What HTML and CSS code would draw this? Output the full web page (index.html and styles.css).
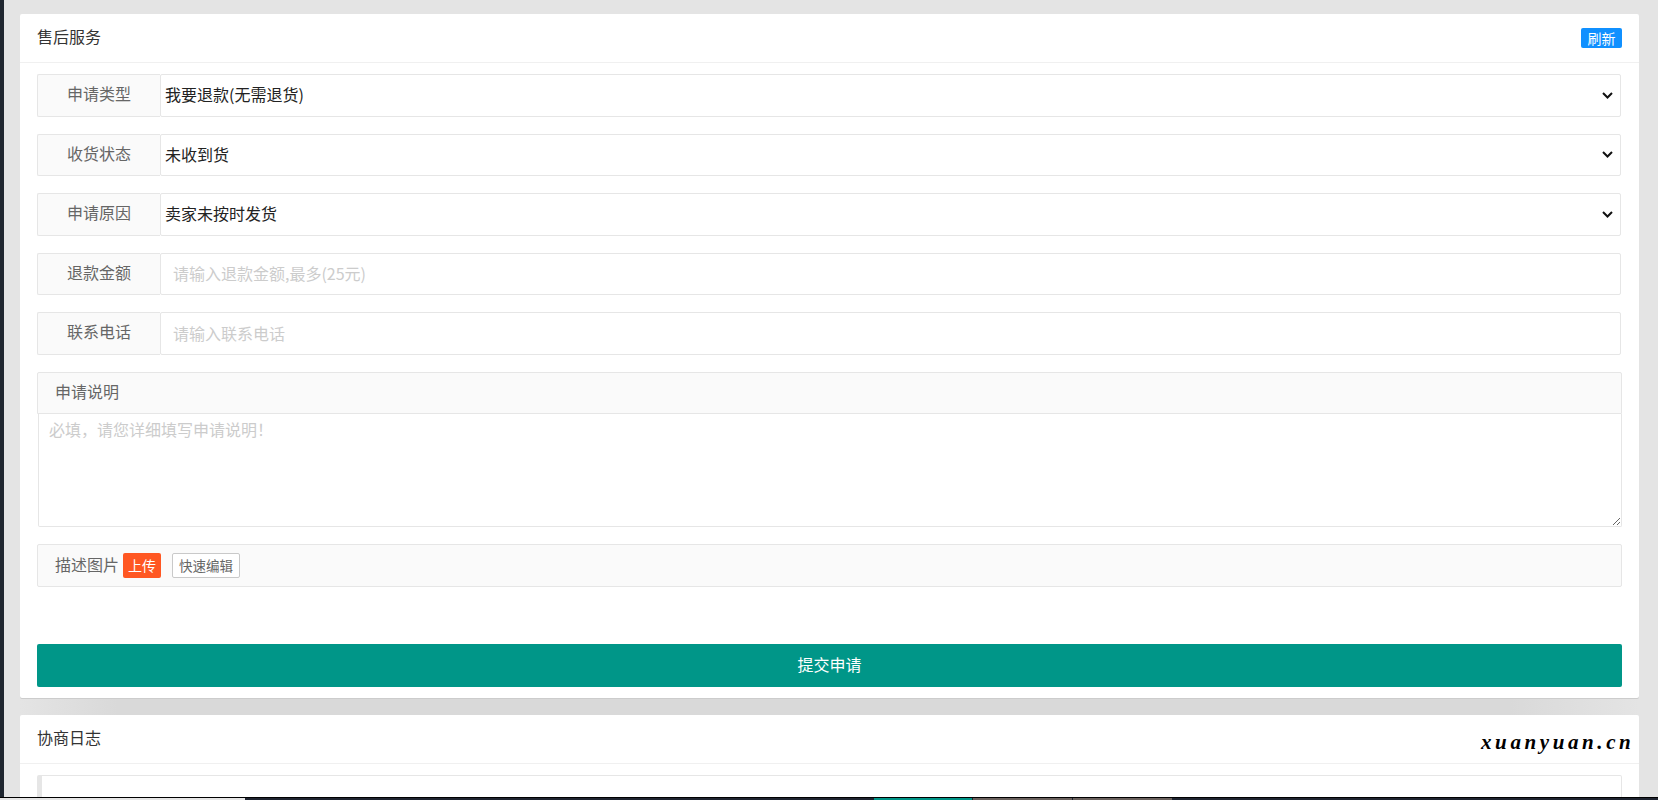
FILE: index.html

```html
<!DOCTYPE html>
<html lang="zh-CN">
<head>
    <meta charset="UTF-8">
    <meta name="viewport" content="width=device-width, initial-scale=1.0">
    <title>售后服务</title>
    <link rel="stylesheet" href="styles.css">
</head>
<body>
    <div class="page">
        <div class="side-strip"></div>
        <div class="cards">
            <div class="card card-main">
                <div class="card-header">
                    <span class="card-title">售后服务</span>
                    <button class="btn-refresh" type="button">刷新</button>
                </div>
                <form class="card-body">
                    <div class="form-row">
                        <label class="row-label">申请类型</label>
                        <select class="row-field row-select">
                            <option>我要退款(无需退货)</option>
                        </select>
                    </div>
                    <div class="form-row">
                        <label class="row-label">收货状态</label>
                        <select class="row-field row-select">
                            <option>未收到货</option>
                        </select>
                    </div>
                    <div class="form-row">
                        <label class="row-label">申请原因</label>
                        <select class="row-field row-select">
                            <option>卖家未按时发货</option>
                        </select>
                    </div>
                    <div class="form-row">
                        <label class="row-label">退款金额</label>
                        <input class="row-field row-input" type="text" placeholder="请输入退款金额,最多(25元)">
                    </div>
                    <div class="form-row">
                        <label class="row-label">联系电话</label>
                        <input class="row-field row-input" type="text" placeholder="请输入联系电话">
                    </div>
                    <div class="text-block">
                        <div class="text-title">申请说明</div>
                        <textarea class="text-area" placeholder="必填，请您详细填写申请说明！"></textarea>
                    </div>
                    <div class="pic-row">
                        <span class="pic-label">描述图片</span>
                        <button class="btn-upload" type="button">上传</button>
                        <button class="btn-edit" type="button">快速编辑</button>
                    </div>
                    <button class="btn-submit" type="button">提交申请</button>
                </form>
            </div>
            <div class="card card-log">
                <div class="card-header">
                    <span class="card-title">协商日志</span>
                </div>
                <div class="card-body">
                    <div class="log-box"></div>
                </div>
            </div>
        </div>
        <div class="side-space"></div>
    </div>

    <!-- watermark and the taskbar edge sit over the page -->
    <div class="watermark">xuanyuan.cn</div>
    <div class="taskbar">
        <div class="task-light"></div>
        <div class="task-dark"></div>
        <div class="task-active"></div>
        <div class="task-app"></div>
        <div class="task-app"></div>
    </div>
</body>
</html>
```

FILE: styles.css

```css
html, body {
    height: 100%;
    overflow: hidden;
}

body {
    margin: 0;
    padding: 0;
    background-color: #e4e4e4;
    color: #333;
    font-family: "Noto Sans CJK SC", "Liberation Sans", sans-serif;
    font-size: 16px;
}

.page {
    display: flex;
    height: 800px;
    overflow: hidden;
}

.side-strip {
    flex: 0 0 4px;
    background-color: #1f2630;
}

.cards {
    flex: 0 0 1619px;
    margin: 14px 0 0 16px;
    background: linear-gradient(to right, #e4e4e4, #d9d9d9 6%, #d9d9d9 92%, #e4e4e4);
}

.side-space {
    flex: 1;
}

.card {
    background-color: #fff;
    border-radius: 2px;
}

.card-main {
    box-shadow: 0 1px 0 #ccc;
}

.card-log {
    margin-top: 17px;
    height: 120px;
}

.card-header {
    display: flex;
    align-items: center;
    justify-content: space-between;
    height: 48px;
    padding: 0 17px;
    border-bottom: 1px solid #f0f0f0;
}

.card-title {
    margin-bottom: 4px;
}

.btn-refresh {
    width: 41px;
    height: 20px;
    padding: 0;
    border: none;
    border-radius: 2px;
    background-color: #1090ff;
    color: #fff;
    font-family: inherit;
    font-size: 14px;
    line-height: 20px;
}

.card-body {
    padding: 11px 17px;
}

.form-row {
    display: flex;
    height: 42.6px;
    margin-bottom: 17px;
}

.row-label {
    flex: 0 0 122px;
    border: 1px solid #e6e6e6;
    border-right: none;
    border-radius: 2px 0 0 2px;
    background-color: #fafafa;
    color: #666;
    text-align: center;
    line-height: 36px;
}

.row-field {
    flex: 1;
    min-width: 0;
    height: 100%;
    margin-right: 1px;
    box-sizing: border-box;
    border: 1px solid #e6e6e6;
    border-radius: 2px;
    background-color: #fff;
    color: #222;
    font-family: inherit;
    font-size: 16px;
    outline: none;
}

/* own chevron, the default arrow is too small */
.row-select {
    appearance: none;
    padding: 0 30px 2px 4px;
    background-image: url("data:image/svg+xml,%3Csvg xmlns='http://www.w3.org/2000/svg' width='11' height='7' viewBox='0 0 11 7'%3E%3Cpath d='M1 1l4.5 4.5L10 1' fill='none' stroke='%23111' stroke-width='2'/%3E%3C/svg%3E");
    background-repeat: no-repeat;
    background-position: right 7px center;
}

.row-input {
    padding: 0 12px 2px;
}

.row-input::placeholder,
.text-area::placeholder {
    color: #ccc;
    opacity: 1;
}

.text-block {
    margin-bottom: 17px;
}

.text-title {
    height: 40px;
    padding-left: 17px;
    border: 1px solid #e6e6e6;
    border-radius: 2px 2px 0 0;
    background-color: #fafafa;
    color: #666;
    line-height: 36px;
}

.text-area {
    display: block;
    box-sizing: border-box;
    width: calc(100% - 1px);
    height: 113px;
    margin-left: 1px;
    padding: 3px 10px;
    border: 1px solid #e6e6e6;
    border-top: none;
    border-radius: 0 0 2px 2px;
    font-family: inherit;
    font-size: 16px;
    outline: none;
}

.pic-row {
    display: flex;
    align-items: center;
    box-sizing: border-box;
    height: 43px;
    padding-left: 17px;
    border: 1px solid #e6e6e6;
    border-radius: 2px;
    background-color: #fafafa;
    color: #666;
}

.pic-label {
    margin-bottom: 2px;
}

.btn-upload {
    width: 38px;
    height: 25px;
    margin-left: 4px;
    padding: 0;
    border: none;
    border-radius: 2px;
    background-color: #ff5722;
    color: #fff;
    font-family: inherit;
    font-size: 14px;
    line-height: 25px;
}

.btn-edit {
    width: 68px;
    height: 25px;
    margin-left: 11px;
    padding: 0;
    border: 1px solid #c9c9c9;
    border-radius: 2px;
    background-color: #fff;
    color: #666;
    font-family: inherit;
    font-size: 13.5px;
    line-height: 23px;
}

.btn-submit {
    display: block;
    width: 100%;
    height: 43px;
    margin-top: 57px;
    padding: 0 0 2px;
    border: none;
    border-radius: 2px;
    background-color: #009688;
    color: #fff;
    font-family: inherit;
    font-size: 16px;
}

.log-box {
    height: 60px;
    border: 1px solid #e6e6e6;
    border-left: 5px solid #e6e6e6;
    border-radius: 2px;
}

.watermark {
    position: absolute;
    left: 1481px;
    top: 729px;
    color: #000;
    font-family: "Liberation Serif", serif;
    font-size: 21px;
    font-style: italic;
    font-weight: bold;
    letter-spacing: 3.6px;
    line-height: 26px;
}

.taskbar {
    position: fixed;
    left: 0;
    right: 0;
    bottom: 0;
    display: flex;
    height: 2px;
    border-top: 1px solid #000;
    background-color: #1f2430;
}

.task-light {
    flex: 0 0 245px;
    background-color: #e6e6e6;
}

.task-dark {
    flex: 0 0 629px;
}

.task-active {
    flex: 0 0 98px;
    margin-right: 1px;
    background-color: #009688;
}

.task-app {
    flex: 0 0 99px;
    margin-right: 1px;
    background-color: #6b625e;
}
```
